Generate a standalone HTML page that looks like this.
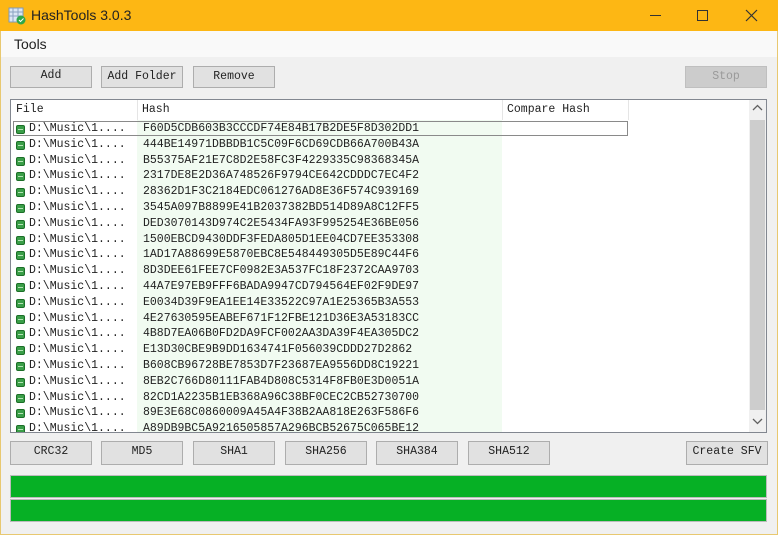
<!DOCTYPE html>
<html><head><style>
*{margin:0;padding:0;box-sizing:border-box}
body{width:778px;height:535px;background:#f0f0f0;position:relative;overflow:hidden;font-family:"Liberation Mono",monospace;font-size:11px;color:#222}
.a{position:absolute}
.title{left:0;top:0;width:778px;height:31px;background:#fdb714}
.frame{left:0;top:31px;width:778px;height:504px;border:1px solid #e8c870;border-top:none}
.btn{position:absolute;background:#e1e1e1;border:1px solid #adadad;text-align:center;line-height:20px;font-size:11.5px}
.pb{position:absolute;left:10px;width:757px;height:23px;background:#06b025;border:1px solid #bcbcbc}
.row{position:absolute;left:0;height:16px;white-space:nowrap;line-height:16px;font-size:11.5px}
.ic{position:absolute;left:5px;top:4px;width:9px;height:9px;background:#3a9e48;border:1px solid #1b6e27;border-radius:2px}
.ic:after{content:"";position:absolute;left:1px;top:3px;width:5px;height:1px;background:#b5e3b5}
</style></head><body>
<div class="a title">
<svg class="a" style="left:8px;top:7px" width="18" height="18"><rect x="1" y="1" width="14" height="14" fill="#dbe6f4" stroke="#7f9ab8"/><path d="M1 5h14M1 9h14M5 1v14M10 1v14" stroke="#8aa2c0"/><circle cx="13" cy="13" r="4.5" fill="#2fa84a"/><path d="M11 13l1.5 1.5 3-3" stroke="#fff" fill="none"/></svg>
<div class="a" style="left:31px;top:7px;font-family:'Liberation Sans',sans-serif;font-size:14px">HashTools 3.0.3</div>
<div class="a" style="left:650px;top:15px;width:11px;height:1px;background:#333"></div>
<div class="a" style="left:697px;top:10px;width:11px;height:11px;border:1px solid #333"></div>
<svg class="a" style="left:745px;top:9px" width="13" height="13"><path d="M1 1L12 12M12 1L1 12" stroke="#333" stroke-width="1.2"/></svg>
</div>
<div class="a frame"></div>
<div class="a" style="left:1px;top:31px;width:776px;height:26px;background:#f9f9f9"></div>
<div class="a" style="left:14px;top:36px;font-family:'Liberation Sans',sans-serif;font-size:14px">Tools</div>
<div class="btn" style="left:10px;top:66px;width:82px;height:22px;line-height:18px">Add</div>
<div class="btn" style="left:101px;top:66px;width:82px;height:22px">Add Folder</div>
<div class="btn" style="left:193px;top:66px;width:82px;height:22px">Remove</div>
<div class="btn" style="left:685px;top:66px;width:82px;height:22px;background:#cccccc;border-color:#bfbfbf;color:#9a9a9a">Stop</div>
<div class="a" style="left:10px;top:99px;width:757px;height:334px;background:#fff;border:1px solid #828790;overflow:hidden">
<div class="a" style="left:126px;top:20px;width:365px;height:320px;background:#f1fbf1"></div>
<div class="a" style="left:126px;top:0;width:1px;height:20px;background:#e5e5e5"></div>
<div class="a" style="left:491px;top:0;width:1px;height:20px;background:#e5e5e5"></div>
<div class="a" style="left:617px;top:0;width:1px;height:20px;background:#e5e5e5"></div>
<div class="a" style="left:5px;top:3px;font-size:11.5px">File</div>
<div class="a" style="left:131px;top:3px;font-size:11.5px">Hash</div>
<div class="a" style="left:496px;top:3px;font-size:11.5px">Compare Hash</div>
<div class="a" style="left:2px;top:21px;width:615px;height:15px;border:1px solid #8a8a8a"></div>
<div id="rows"></div>
<div class="a" style="left:738px;top:0;width:17px;height:337px;background:#f0f0f0"></div>
<div class="a" style="left:739px;top:20px;width:15px;height:290px;background:#cdcdcd"></div>
<svg class="a" style="left:741px;top:4px" width="11" height="8"><path d="M1 6l4.5-4.5L10 6" stroke="#606060" fill="none" stroke-width="1.3"/></svg>
<svg class="a" style="left:741px;top:317px" width="11" height="8"><path d="M1 2l4.5 4.5L10 2" stroke="#606060" fill="none" stroke-width="1.3"/></svg>
</div>
<div class="btn" style="left:10px;top:441px;width:82px;height:24px">CRC32</div>
<div class="btn" style="left:101px;top:441px;width:82px;height:24px">MD5</div>
<div class="btn" style="left:193px;top:441px;width:82px;height:24px">SHA1</div>
<div class="btn" style="left:285px;top:441px;width:82px;height:24px">SHA256</div>
<div class="btn" style="left:376px;top:441px;width:82px;height:24px">SHA384</div>
<div class="btn" style="left:468px;top:441px;width:82px;height:24px">SHA512</div>
<div class="btn" style="left:686px;top:441px;width:82px;height:24px">Create SFV</div>
<div class="pb" style="top:475px"></div>
<div class="pb" style="top:499px"></div>
<script>
var h=["F60D5CDB603B3CCCDF74E84B17B2DE5F8D302DD1","444BE14971DBBDB1C5C09F6CD69CDB66A700B43A","B55375AF21E7C8D2E58FC3F4229335C98368345A","2317DE8E2D36A748526F9794CE642CDDDC7EC4F2","28362D1F3C2184EDC061276AD8E36F574C939169","3545A097B8899E41B2037382BD514D89A8C12FF5","DED3070143D974C2E5434FA93F995254E36BE056","1500EBCD9430DDF3FEDA805D1EE04CD7EE353308","1AD17A88699E5870EBC8E548449305D5E89C44F6","8D3DEE61FEE7CF0982E3A537FC18F2372CAA9703","44A7E97EB9FFF6BADA9947CD794564EF02F9DE97","E0034D39F9EA1EE14E33522C97A1E25365B3A553","4E27630595EABEF671F12FBE121D36E3A53183CC","4B8D7EA06B0FD2DA9FCF002AA3DA39F4EA305DC2","E13D30CBE9B9DD1634741F056039CDDD27D2862","B608CB96728BE7853D7F23687EA9556DD8C19221","8EB2C766D80111FAB4D808C5314F8FB0E3D0051A","82CD1A2235B1EB368A96C38BF0CEC2CB52730700","89E3E68C0860009A45A4F38B2AA818E263F586F6","A89DB9BC5A9216505857A296BCB52675C065BE12"];
var s="";for(var i=0;i<h.length;i++){var t=21+i*15.8;s+='<div class="row" style="top:'+t+'px;width:620px"><div class="ic"></div><span style="position:absolute;left:18px">D:\\Music\\1....</span><span style="position:absolute;left:132px">'+h[i]+'</span></div>';}
document.getElementById("rows").innerHTML=s;
</script>
</body></html>
